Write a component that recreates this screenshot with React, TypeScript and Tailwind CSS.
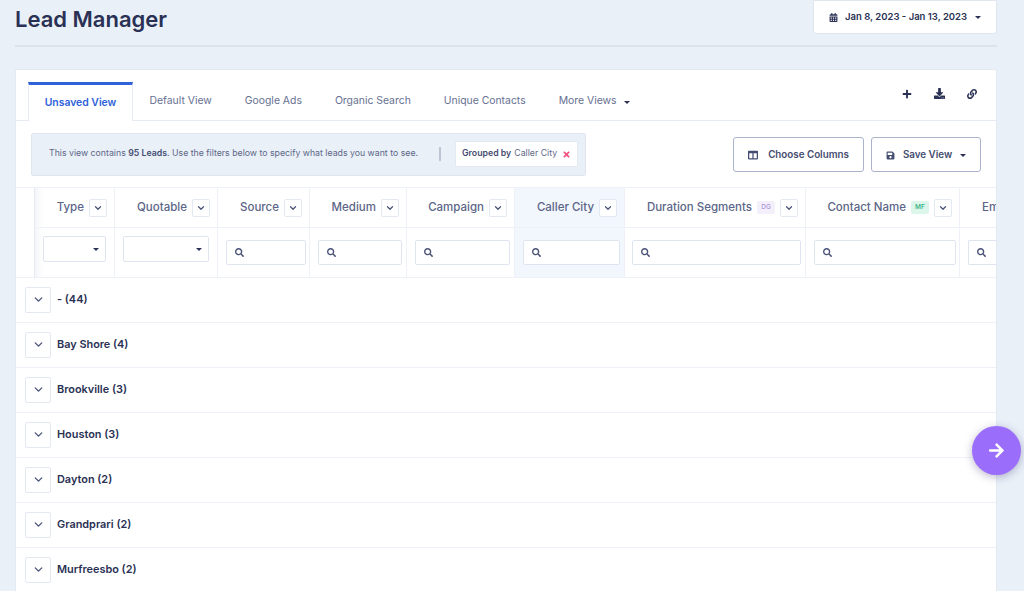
import { ChevronDown } from "lucide-react";
import { FaArrowRight, FaCalendarAlt, FaColumns, FaDownload, FaLink, FaPlus, FaSave, FaSearch, FaTimes } from "react-icons/fa";

const tabs = ["Default View", "Google Ads", "Organic Search", "Unique Contacts"];

const columns = [
  { name: "Type", width: "w-[80px]", filter: "select", input: "w-[63px] ml-[8px]" },
  { name: "Quotable", width: "w-[103px]", filter: "select", input: "w-[86px] ml-[8px]" },
  { name: "Source", width: "w-[92px]", filter: "search", input: "w-[80px] ml-[8px]" },
  { name: "Medium", width: "w-[97px]", filter: "search", input: "w-[84px] ml-[8px]" },
  { name: "Campaign", width: "w-[108px]", filter: "search", input: "w-[95px] ml-[8px]" },
  { name: "Caller City", width: "w-[110px]", filter: "search", input: "w-[97px] ml-[8px]", active: true },
  { name: "Duration Segments", width: "w-[181px]", filter: "search", input: "w-[169px] ml-[7px]", tag: "DG" },
  { name: "Contact Name", width: "w-[154px]", filter: "search", input: "w-[142px] ml-[8px]", tag: "MF" },
];

const groups = ["- (44)", "Bay Shore (4)", "Brookville (3)", "Houston (3)", "Dayton (2)", "Grandprari (2)", "Murfreesbo (2)"];

const Caret = () => <span className="inline-block border-x-[3px] border-t-[3px] border-x-transparent border-t-[#2a3154]" />;

const SortButton = () => (
  <span className="flex h-[18px] w-[18px] shrink-0 items-center justify-center rounded-[2px] border border-[#e3e8f3] bg-white">
    <ChevronDown size={10} strokeWidth={3} className="text-[#4b5478]" />
  </span>
);

const App = () => {
  return (
    <div className="relative h-[591px] w-[1024px] overflow-hidden bg-[#e9f0f8] font-['Inter',sans-serif] text-[#2a3154]">
      <div className="ml-[15px] w-[982px]">
        <div className="flex h-[47px] items-start justify-between border-b-2 border-[#dbe3ec]">
          <h1 className="mt-[5px] text-[22px] leading-[28px] font-semibold">Lead Manager</h1>
          <button className="flex h-[34px] w-[184px] items-center rounded-b-[3px] border border-[#dfe6f0] bg-white pl-[15px] text-[9.5px] font-semibold">
            <FaCalendarAlt size={9} />
            <span className="ml-[7px]">Jan 8, 2023 - Jan 13, 2023</span>
            <span className="ml-[8px] flex"><Caret /></span>
          </button>
        </div>

        <div className="mt-[22px] h-[540px] overflow-hidden rounded-[2px] border border-[#e3e9f2] bg-white">
          <div className="flex h-[51px] items-end border-b border-[#e6ebf3] pl-[12px]">
            <div className="mb-[-1px] flex h-[39px] w-[105px] items-center justify-center border-x border-t-[3px] border-x-[#e6ebf3] border-t-[#2f62d9] bg-white text-[10.4px] font-semibold text-[#2f62d9]">
              Unsaved View
            </div>
            {tabs.map((tab) => (
              <div key={tab} className="flex h-[38px] items-center px-[16.5px] text-[10.4px] text-[#667091]">
                {tab}
              </div>
            ))}
            <div className="flex h-[38px] items-center gap-[7px] px-[16.5px] text-[10.4px] text-[#667091]">
              More Views
              <span className="mt-[3px] flex"><Caret /></span>
            </div>
            <div className="mb-[21px] ml-auto flex items-center gap-[22px] pr-[19px]">
              <FaPlus size={10} />
              <FaDownload size={11} />
              <FaLink size={10} />
            </div>
          </div>

          <div className="flex h-[66px] items-center justify-between pr-[15px] pl-[15px]">
            <div className="flex h-[43px] w-[555px] items-center rounded-[2px] border border-[#dfe6ef] bg-[#e9f0f8] pl-[17px] text-[8.75px] whitespace-nowrap text-[#5e6787]">
              <span className="w-[373px]">
                This view contains <b className="font-semibold text-[#454d70]">95 Leads</b>. Use the filters below to specify what leads you want to see.
              </span>
              <span className="ml-[17px] h-[14px] w-[2px] bg-[#bcc6d4]" />
              <span className="ml-[14px] flex h-[26px] w-[123px] items-center rounded-[2px] border border-[#e3e9f2] bg-white pl-[6px]">
                <b className="font-semibold text-[#454d70]">Grouped by</b>
                <span className="ml-[3px]">Caller City</span>
                <FaTimes size={9} className="ml-[5px] text-[#f2507e]" />
              </span>
            </div>
            <div className="flex gap-[7px]">
              <button className="flex h-[35px] w-[131px] items-center justify-center gap-[10px] rounded-[3px] border border-[#a9b3cc] bg-white pt-[2px] text-[9.8px] font-semibold text-[#454d70]">
                <FaColumns size={10} />
                Choose Columns
              </button>
              <button className="flex h-[35px] w-[110px] items-center justify-center gap-[8px] rounded-[3px] border border-[#a9b3cc] bg-white pt-[2px] text-[9.8px] font-semibold text-[#454d70]">
                <FaSave size={9} />
                Save View
                <Caret />
              </button>
            </div>
          </div>

          <div className="flex border-y border-[#eef1f7]">
            <div className="w-[19px] shrink-0 border-r border-[#e6ebf3]" />
            {columns.map((col, i) => (
              <div key={col.name} className={`relative ${col.width} shrink-0 border-r border-[#eef1f7] ${col.active ? "bg-[#f2f7fe]" : ""}`}>
                {i === 0 && <div className="absolute inset-y-0 left-0 w-[8px] bg-linear-to-r from-[#f3f5f8] to-transparent" />}
                <div className="flex h-[40px] items-center justify-end gap-[5px] border-b border-[#eef1f7] pr-[7px] text-[11.5px] font-medium text-[#5c6587]">
                  <span>{col.name}</span>
                  {col.tag === "DG" && (
                    <span className="flex h-[13px] w-[18px] items-center justify-center rounded-[2px] bg-[#f3effb] text-[6.5px] text-[#a98fd8]">DG</span>
                  )}
                  {col.tag === "MF" && (
                    <span className="flex h-[13px] w-[18px] items-center justify-center rounded-[2px] bg-[#dcf6ec] text-[6.5px] text-[#2fae7c]">MF</span>
                  )}
                  <SortButton />
                </div>
                <div className="flex h-[49px] items-center">
                  {col.filter === "select" ? (
                    <div className={`${col.input} mb-[7px] flex h-[26px] items-center justify-end rounded-[2px] border border-[#dfe5f0] bg-white pr-[6px]`}>
                      <Caret />
                    </div>
                  ) : (
                    <div className={`${col.input} mb-[1px] flex h-[25px] items-center rounded-[2px] border border-[#dfe5f0] bg-white pl-[8px]`}>
                      <FaSearch size={9} className="text-[#4b5478]" />
                    </div>
                  )}
                </div>
              </div>
            ))}
            <div className="grow">
              <div className="flex h-[40px] items-center border-b border-[#eef1f7] pl-[22px] text-[11.5px] font-medium text-[#5c6587]">Em</div>
              <div className="flex h-[49px] items-center pl-[8px]">
                <div className="mb-[1px] flex h-[25px] w-full items-center rounded-l-[2px] border-y border-l border-[#dfe5f0] pl-[8px]">
                  <FaSearch size={9} className="text-[#4b5478]" />
                </div>
              </div>
            </div>
          </div>

          {groups.map((group) => (
            <div key={group} className="flex h-[45px] items-center gap-[6px] border-b border-[#eef1f7] pb-[1px] pl-[9px] text-[10.9px] font-semibold">
              <span className="flex h-[26px] w-[26px] items-center justify-center rounded-[2px] border border-[#e3e8f3]">
                <ChevronDown size={13} strokeWidth={2.5} className="text-[#4b5478]" />
              </span>
              <span>{group}</span>
            </div>
          ))}
        </div>
      </div>

      <button className="absolute top-[426px] left-[972px] flex h-[49px] w-[49px] items-center justify-center rounded-full bg-[#9b6dfb] text-white shadow-[0_2px_8px_rgba(60,50,110,0.35)]">
        <FaArrowRight size={17} />
      </button>
    </div>
  );
};

export default App;
